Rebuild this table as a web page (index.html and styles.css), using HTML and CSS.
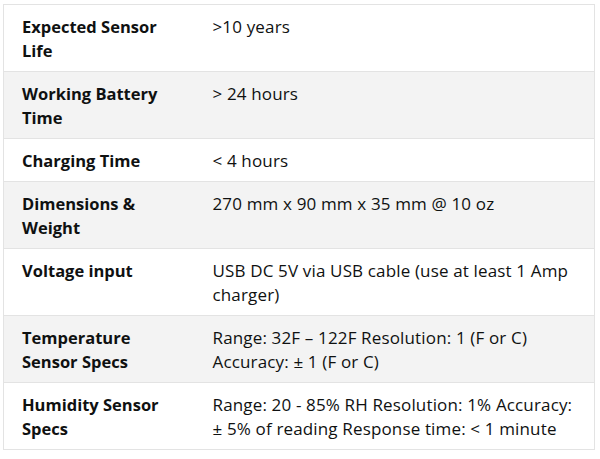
FILE: index.html
```html
<!DOCTYPE html>
<html>
<head>
<meta charset="utf-8">
<link rel="stylesheet" href="styles.css">
</head>
<body>
<table class="specs">
  <colgroup><col class="label-col"><col class="value-col"></colgroup>
  <tr class="odd"><th>Expected Sensor Life</th><td>&gt;10 years</td></tr>
  <tr class="even"><th>Working Battery Time</th><td>&gt; 24 hours</td></tr>
  <tr class="odd"><th>Charging Time</th><td>&lt; 4 hours</td></tr>
  <tr class="even"><th>Dimensions &amp; Weight</th><td>270 mm x 90 mm x 35 mm @ 10 oz</td></tr>
  <tr class="odd"><th>Voltage input</th><td>USB DC 5V via USB cable (use at least 1 Amp charger)</td></tr>
  <tr class="even"><th>Temperature Sensor Specs</th><td>Range: 32F – 122F Resolution: 1 (F or C) Accuracy: ±&nbsp;1 (F or C)</td></tr>
  <tr class="odd"><th>Humidity Sensor Specs</th><td>Range: 20 - 85% RH Resolution: 1% Accuracy: ±&nbsp;5% of reading Response time: &lt; 1 minute</td></tr>
</table>
</body>
</html>
```
FILE: styles.css
```css
html, body {
  margin: 0;
  padding: 0;
  background: #ffffff;
}
body {
  padding: 4px 0 0 3px;
  font-family: "Open Sans", "Liberation Sans", sans-serif;
  font-size: 16px;
  line-height: 24px;
  color: #0f1111;
}
.specs {
  width: 592px;
  table-layout: fixed;
  border-collapse: collapse;
  border: 1px solid #e3e3e3;
}
.label-col {
  width: 191px;
}
.specs th, .specs td {
  border-top: 1px solid #e3e3e3;
  padding: 10px 18px 8px 18px;
  text-align: left;
  vertical-align: top;
}
.specs th {
  font-weight: 700;
  font-size: 16.5px;
}
.specs td {
  padding-right: 6px;
  font-weight: 400;
  font-size: 17px;
  letter-spacing: 0.15px;
}
.even {
  background: #f3f3f3;
}
```
